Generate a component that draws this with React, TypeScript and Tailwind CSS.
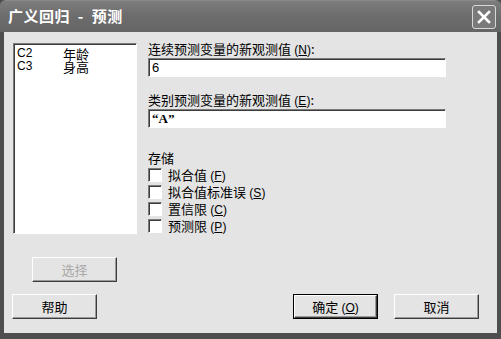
import React from "react";

const cjk = "font-['Noto_Sans_CJK_SC','Noto_Sans',sans-serif]";
const sunken =
  "bg-white border border-t-[#7a7a7a] border-l-[#7a7a7a] border-r-white border-b-white shadow-[inset_1px_1px_0_#3c3c3c]";

function Mnemonic({ k }: { k: string }) {
  return (
    <span className="font-['Liberation_Sans',sans-serif] text-[12px] leading-[14px]">
      {" ("}
      <span className="underline">{k}</span>
      {")"}
    </span>
  );
}

function Btn({
  children,
  disabled,
  primary,
  className = "",
}: {
  children: React.ReactNode;
  disabled?: boolean;
  primary?: boolean;
  className?: string;
}) {
  const face = (
    <div
      className={`flex h-full w-full items-center justify-center border border-t-white border-l-white border-r-[#3c3c3c] border-b-[#3c3c3c] bg-[#e4e4e4] shadow-[inset_-1px_-1px_0_#9a9a9a] text-[13px] leading-[16px] ${
        disabled ? "text-[#a8a8a8]" : "text-black"
      }`}
    >
      <span>{children}</span>
    </div>
  );
  if (primary) {
    return (
      <div className={`h-[25px] w-[85px] border border-black ${className}`}>
        {face}
      </div>
    );
  }
  return <div className={`h-[25px] w-[85px] ${className}`}>{face}</div>;
}

function Check({ label }: { label: React.ReactNode }) {
  return (
    <div className="flex h-[17px] items-center">
      <div className={`h-[14px] w-[14px] ${sunken}`} />
      <span className="ml-[6px] text-[13px] leading-[15px]">{label}</span>
    </div>
  );
}

export default function App() {
  return (
    <div
      className={`flex h-[339px] w-[501px] flex-col bg-[#4e4e4e] text-black ${cjk}`}
    >
      {/* title bar */}
      <div className="flex h-[32px] items-center justify-between rounded-t-[6px] border-t border-[#8a8a8a] bg-gradient-to-b from-[#7d7d7d] via-[#6c6c6c] to-[#656565] pl-[8px] pr-[5px]">
        <span className="text-[15px] font-bold tracking-[0.5px] text-white">
          广义回归 &nbsp;-&nbsp; 预测
        </span>
        <div className="flex h-[24px] w-[24px] items-center justify-center rounded-[3px] border border-[#d8d8d8] bg-[#7a7a7a]">
          <svg width="14" height="14" viewBox="0 0 14 14">
            <path
              d="M2 2 L12 12 M12 2 L2 12"
              stroke="white"
              strokeWidth="2.6"
              strokeLinecap="square"
            />
          </svg>
        </div>
      </div>

      {/* body */}
      <div className="mx-[4px] mb-[6px] flex flex-1 flex-col bg-[#e4e4e4]">
        <div className="flex pt-[9px] pl-[9px]">
          {/* left column */}
          <div className="flex w-[124px] flex-col">
            <div className={`mt-[2px] h-[191px] pt-[3px] pl-[3px] ${sunken}`}>
              <div className="flex h-[13px] items-center text-[13px] leading-[13px]">
                <span className="w-[46px] font-['Liberation_Sans',sans-serif] text-[12px]">
                  C2
                </span>
                <span>年龄</span>
              </div>
              <div className="flex h-[13px] items-center text-[13px] leading-[13px]">
                <span className="w-[46px] font-['Liberation_Sans',sans-serif] text-[12px]">
                  C3
                </span>
                <span>身高</span>
              </div>
            </div>
            <Btn disabled className="mt-[23px] ml-[19px]">
              选择
            </Btn>
          </div>

          {/* right column */}
          <div className="ml-[11px] flex w-[298px] flex-col">
            <div className="h-[16px] text-[13px] leading-[16px]">
              连续预测变量的新观测值
              <Mnemonic k="N" />:
            </div>
            <div
              className={`mt-[1px] flex h-[19px] items-center pl-[3px] font-['Liberation_Sans',sans-serif] text-[13px] ${sunken}`}
            >
              6
            </div>
            <div className="mt-[15px] h-[16px] text-[13px] leading-[16px]">
              类别预测变量的新观测值
              <Mnemonic k="E" />:
            </div>
            <div
              className={`mt-[1px] flex h-[19px] items-center pl-[3px] font-['Liberation_Serif',serif] text-[13px] font-bold ${sunken}`}
            >
              “A”
            </div>
            <div className="mt-[22px] h-[16px] text-[13px] leading-[16px]">
              存储
            </div>
            <div className="flex flex-col">
              <Check
                label={
                  <>
                    拟合值
                    <Mnemonic k="F" />
                  </>
                }
              />
              <Check
                label={
                  <>
                    拟合值标准误
                    <Mnemonic k="S" />
                  </>
                }
              />
              <Check
                label={
                  <>
                    置信限
                    <Mnemonic k="C" />
                  </>
                }
              />
              <Check
                label={
                  <>
                    预测限
                    <Mnemonic k="P" />
                  </>
                }
              />
            </div>
          </div>
        </div>

        {/* bottom buttons */}
        <div className="mt-auto mb-[14px] flex items-center pl-[8px] pr-[18px]">
          <Btn>帮助</Btn>
          <Btn primary className="ml-auto">
            确定
            <Mnemonic k="O" />
          </Btn>
          <Btn className="ml-[16px]">取消</Btn>
        </div>
      </div>
    </div>
  );
}
